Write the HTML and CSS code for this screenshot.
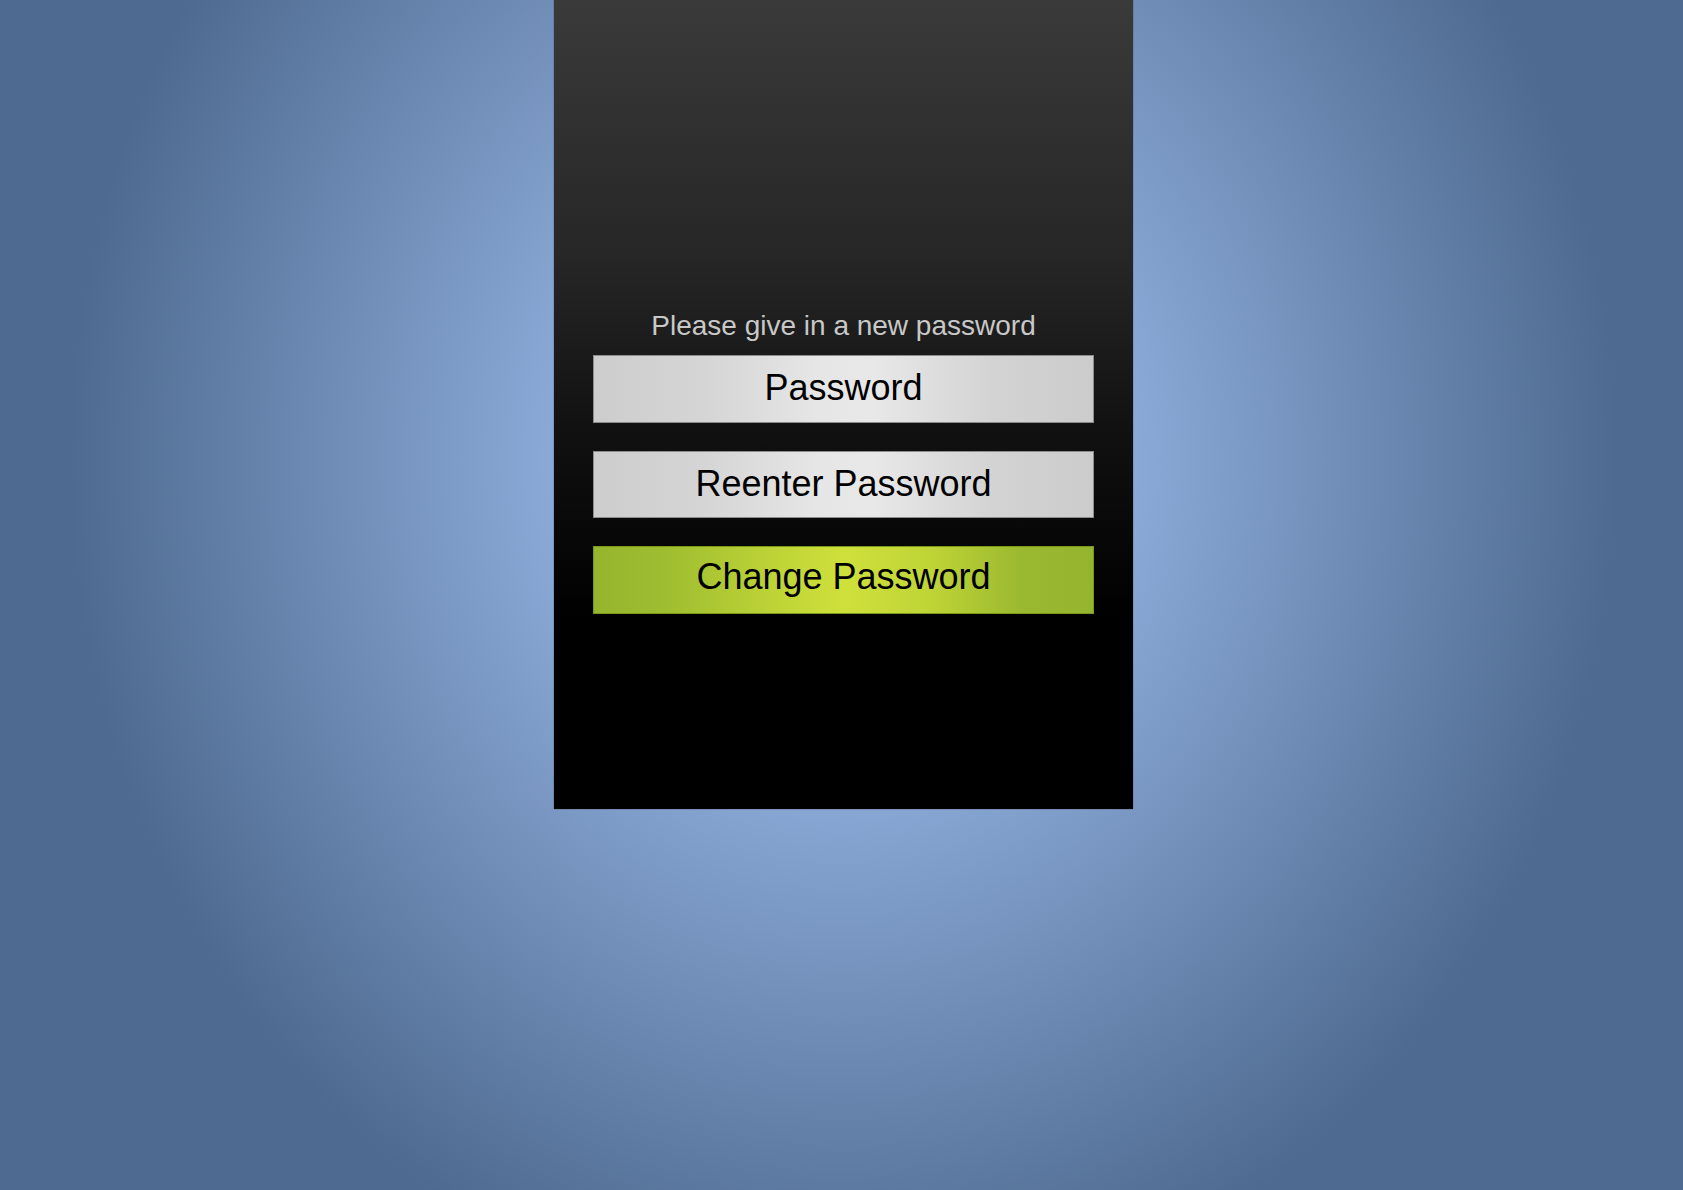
FILE: index.html
```html
<!DOCTYPE html>
<html lang="en">
<head>
<meta charset="utf-8">
<title>Change Password</title>
<link rel="stylesheet" href="styles.css">
</head>
<body>
<main class="panel">
  <form class="form">
    <p class="label">Please give in a new password</p>
    <input class="field" type="password" placeholder="Password">
    <input class="field" type="password" placeholder="Reenter Password">
    <button class="submit" type="button">Change Password</button>
  </form>
</main>
</body>
</html>
```

FILE: styles.css
```css
html, body {
  margin: 0;
  padding: 0;
  height: 100%;
}

body {
  min-height: 1190px;
  background: radial-gradient(ellipse 790px 880px at 843px 460px, #8fafdd 0%, #8aa9d6 37%, #4e6a90 98%, #4e6a90 100%);
  font-family: "Liberation Sans", Arial, sans-serif;
  overflow: hidden;
}

.panel {
  box-sizing: border-box;
  width: 579px;
  height: 809px;
  margin-left: 554px;
  padding: 310px 39px 0;
  background: linear-gradient(to bottom, #3a3a3a 0%, #262626 32%, #121212 52%, #000000 76%, #000000 100%);
  box-shadow: 0 0 1px rgba(40, 50, 70, 0.9);
}

.form {
  display: flex;
  flex-direction: column;
  gap: 28px;
}

.label {
  margin: 0 0 -15px;
  font-size: 28px;
  line-height: 32px;
  color: #c8c8c8;
  text-align: center;
}

.field,
.submit {
  box-sizing: border-box;
  width: 100%;
  height: 67.5px;
  margin: 0;
  font-family: "Liberation Sans", Arial, sans-serif;
  font-size: 36px;
  color: #000;
  text-align: center;
  outline: none;
  border-radius: 0;
}

.field {
  padding: 0 0 1px;
  border: 1px solid #8c8c8c;
  background: linear-gradient(to right, #cdcdcd 0%, #d5d5d5 22%, #e6e6e6 45%, #e8e8e8 56%, #d3d3d3 80%, #cccccc 100%);
}

.field::placeholder {
  color: #000;
  opacity: 1;
}

.submit {
  padding: 0 0 6px;
  border: 1px solid #7a981c;
  background: linear-gradient(to right, #96b52e 0%, #9fbd31 14%, #c0d537 38%, #cfe03b 50%, #bed436 68%, #9ab830 86%, #96b52e 100%);
  cursor: pointer;
}
```
